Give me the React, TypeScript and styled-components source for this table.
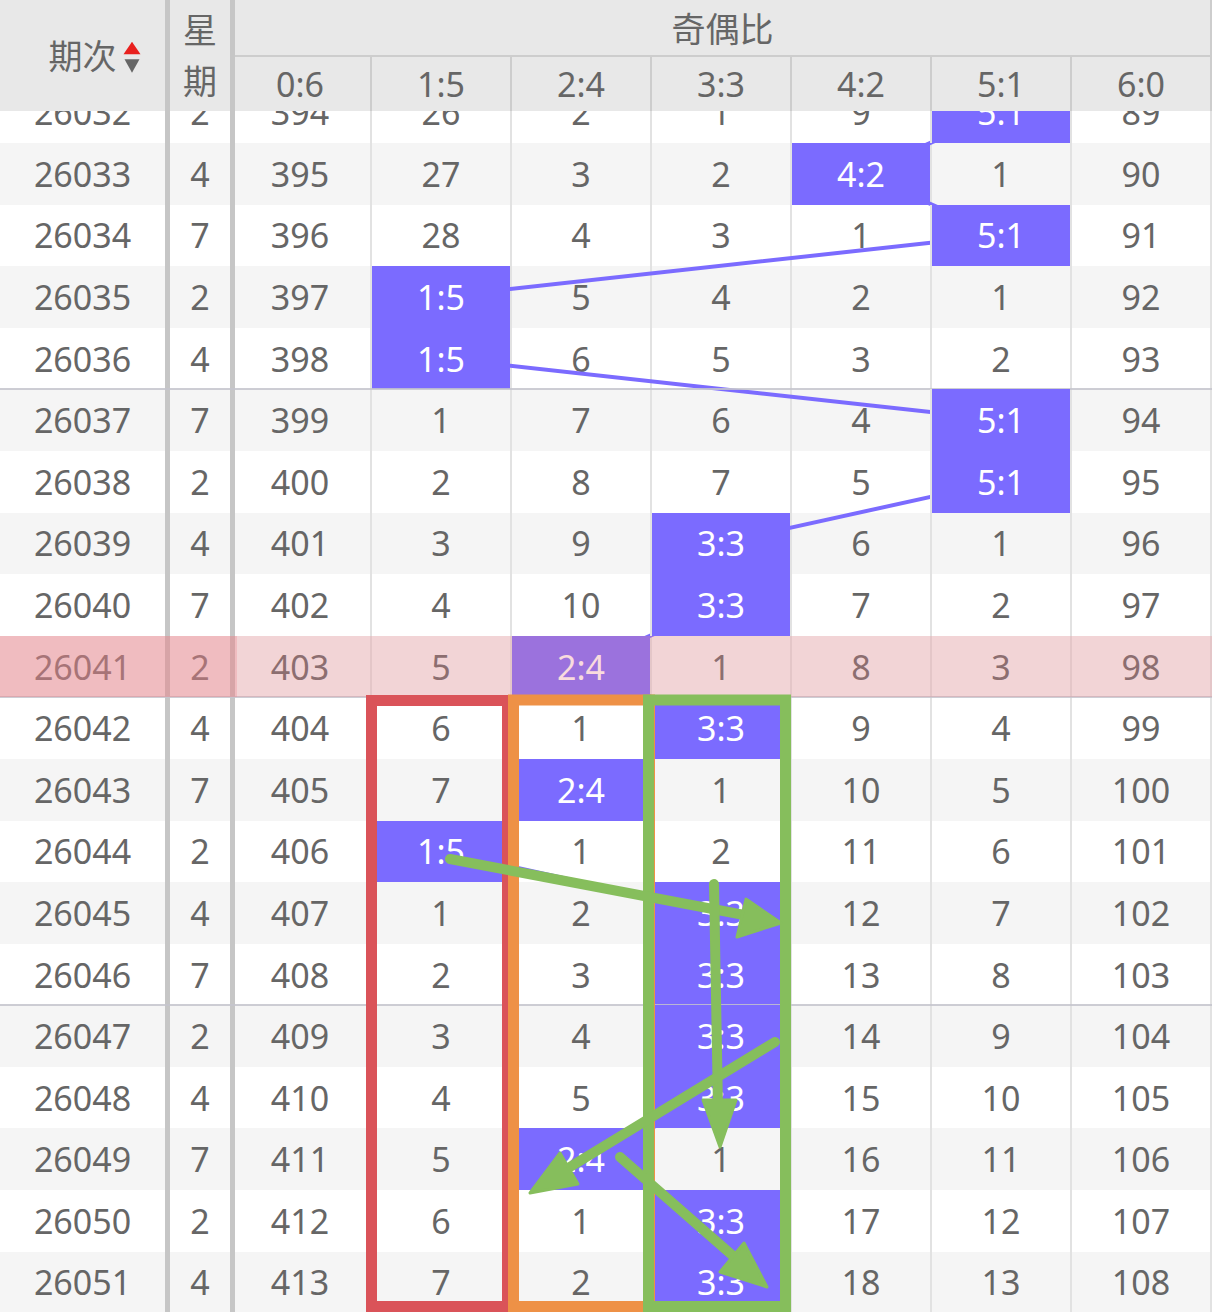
import React from "react";
import styled, { createGlobalStyle, css } from "styled-components";

const ROW_H = 61.6;
const BODY_TOP = 81.4;
const COLS = "170px 65px 135px repeat(5, 140px) 142px";
const PURPLE = "#7b6bff";
const GREEN = "#86be5c";

const LABELS = ["0:6", "1:5", "2:4", "3:3", "4:2", "5:1", "6:0"];

type RowData = { period: number; week: number; vals: (number | null)[]; hit: number };

const mk = (period: number, week: number, vals: (number | null)[]): RowData => ({
  period,
  week,
  vals,
  hit: vals.indexOf(null),
});

const ROWS: RowData[] = [
  mk(26032, 2, [394, 26, 2, 1, 9, null, 89]),
  mk(26033, 4, [395, 27, 3, 2, null, 1, 90]),
  mk(26034, 7, [396, 28, 4, 3, 1, null, 91]),
  mk(26035, 2, [397, null, 5, 4, 2, 1, 92]),
  mk(26036, 4, [398, null, 6, 5, 3, 2, 93]),
  mk(26037, 7, [399, 1, 7, 6, 4, null, 94]),
  mk(26038, 2, [400, 2, 8, 7, 5, null, 95]),
  mk(26039, 4, [401, 3, 9, null, 6, 1, 96]),
  mk(26040, 7, [402, 4, 10, null, 7, 2, 97]),
  mk(26041, 2, [403, 5, null, 1, 8, 3, 98]),
  mk(26042, 4, [404, 6, 1, null, 9, 4, 99]),
  mk(26043, 7, [405, 7, null, 1, 10, 5, 100]),
  mk(26044, 2, [406, null, 1, 2, 11, 6, 101]),
  mk(26045, 4, [407, 1, 2, null, 12, 7, 102]),
  mk(26046, 7, [408, 2, 3, null, 13, 8, 103]),
  mk(26047, 2, [409, 3, 4, null, 14, 9, 104]),
  mk(26048, 4, [410, 4, 5, null, 15, 10, 105]),
  mk(26049, 7, [411, 5, null, 1, 16, 11, 106]),
  mk(26050, 2, [412, 6, 1, null, 17, 12, 107]),
  mk(26051, 4, [413, 7, 2, null, 18, 13, 108]),
];

const HIGHLIGHT = 26041;
const DIVIDER_AFTER = new Set([26036, 26041, 26046]);

const GlobalStyle = createGlobalStyle`
  html, body { margin: 0; padding: 0; background: #fff; }
  body {
    font-family: "Noto Sans", "Noto Sans CJK SC", sans-serif;
    overflow: hidden;
  }
`;

const Viewport = styled.div`
  position: relative;
  width: 1212px;
  height: 1312px;
  overflow: hidden;
  color: #666;
  font-size: 34px;
`;

const Header = styled.div`
  position: absolute;
  top: 0;
  left: 0;
  width: 1212px;
  height: 111px;
  z-index: 5;
  display: grid;
  grid-template-columns: ${COLS};
  grid-template-rows: 57px 54px;
  background: #e8e8e8;
`;

const centered = css`
  display: flex;
  align-items: center;
  justify-content: center;
  box-sizing: border-box;
`;

const PeriodHead = styled.div`
  ${centered};
  grid-column: 1;
  grid-row: 1 / 3;
  border-right: 5px solid #c6c6c6;
`;

const SortLabel = styled.span`
  position: relative;
  line-height: 1;
`;

const SortIcon = styled.svg`
  position: absolute;
  left: calc(100% + 6px);
  top: 50%;
  transform: translateY(-46%);
`;

const WeekHead = styled.div`
  ${centered};
  grid-column: 2;
  grid-row: 1 / 3;
  border-right: 5px solid #c6c6c6;
  text-align: center;
  line-height: 51px;
`;

const GroupHead = styled.div`
  ${centered};
  grid-column: 3 / 10;
  grid-row: 1;
  border-bottom: 2px solid #cdcdcd;
  border-right: 2px solid #cdcdcd;
`;

type Variant = "first" | "data" | "last";

const ColHead = styled.div<{ $variant: Variant }>`
  ${centered};
  grid-row: 2;
  ${(p) =>
    p.$variant === "first"
      ? css`padding-right: 5px;`
      : css`border-left: 2px solid #cdcdcd;`}
  ${(p) => p.$variant === "last" && css`border-right: 2px solid #cdcdcd;`}
`;

const Body = styled.div`
  position: relative;
  margin-top: ${BODY_TOP}px;
`;

const Row = styled.div<{ $alt: boolean; $divider: boolean }>`
  position: relative;
  display: grid;
  grid-template-columns: ${COLS};
  height: ${ROW_H}px;
  background: ${(p) => (p.$alt ? "#f5f5f5" : "#ffffff")};
  ${(p) =>
    p.$divider &&
    css`
      &::after {
        content: "";
        position: absolute;
        left: 0;
        right: 0;
        bottom: -1px;
        height: 2px;
        background: rgba(196, 196, 204, 0.85);
        z-index: 2;
      }
    `}
`;

const FixedCell = styled.div`
  ${centered};
  border-right: 5px solid #c6c6c6;
`;

const DataCell = styled.div<{ $variant: Variant; $hit: boolean }>`
  ${centered};
  ${(p) =>
    p.$variant === "first"
      ? css`padding-right: 5px;`
      : css`border-left: 2px solid #e2e2e2;`}
  ${(p) => p.$variant === "last" && css`border-right: 2px solid #e2e2e2;`}
  ${(p) =>
    p.$hit &&
    css`
      position: relative;
      z-index: 2;
      background: ${PURPLE};
      color: #fff;
    `}
`;

const Tint = styled.span<{ $fixed?: boolean }>`
  position: absolute;
  top: 0;
  bottom: 0;
  left: 0;
  width: ${(p) => (p.$fixed ? "237px" : "100%")};
  background: rgba(234, 130, 137, 0.29);
  z-index: 3;
  pointer-events: none;
`;

const TrendLayer = styled.svg`
  position: absolute;
  top: 0;
  left: 0;
  z-index: 1;
  pointer-events: none;
`;

const Annotations = styled.svg`
  position: absolute;
  top: 0;
  left: 0;
  z-index: 4;
  pointer-events: none;
`;

const colCenter = (k: number) => 441 + (k - 1) * 140;

function Arrow({
  x1,
  y1,
  x2,
  y2,
  head,
}: {
  x1: number;
  y1: number;
  x2: number;
  y2: number;
  head: [number, number][];
}) {
  return (
    <g>
      <line x1={x1} y1={y1} x2={x2} y2={y2} stroke={GREEN} strokeWidth={10} strokeLinecap="round" />
      <polygon
        points={head.map((p) => p.join(",")).join(" ")}
        fill={GREEN}
        stroke={GREEN}
        strokeWidth={3}
        strokeLinejoin="round"
      />
    </g>
  );
}

export default function App() {
  const trendPts = ROWS.map((r, i) => `${colCenter(r.hit)},${i * ROW_H + ROW_H / 2}`).join(" ");

  return (
    <>
      <GlobalStyle />
      <Viewport>
        <Header>
          <PeriodHead>
            <SortLabel>
              期次
              <SortIcon width="18" height="32" viewBox="0 0 18 32">
                <polygon points="0.5,13 9,0.5 17.5,13" fill="#e8201e" />
                <polygon points="1.5,18 16.5,18 9,31.5" fill="#666" />
              </SortIcon>
            </SortLabel>
          </PeriodHead>
          <WeekHead>星期</WeekHead>
          <GroupHead>奇偶比</GroupHead>
          {LABELS.map((l, j) => (
            <ColHead key={l} $variant={j === 0 ? "first" : j === 6 ? "last" : "data"}>
              {l}
            </ColHead>
          ))}
        </Header>

        <Body>
          <TrendLayer width="1212" height={ROWS.length * ROW_H} viewBox={`0 0 1212 ${ROWS.length * ROW_H}`}>
            <polyline points={trendPts} fill="none" stroke={PURPLE} strokeWidth={4} strokeLinejoin="round" />
          </TrendLayer>
          {ROWS.map((r, i) => (
            <Row key={r.period} $alt={i % 2 === 1} $divider={DIVIDER_AFTER.has(r.period)}>
              <FixedCell>{r.period}</FixedCell>
              <FixedCell>{r.week}</FixedCell>
              {r.vals.map((v, j) => (
                <DataCell
                  key={j}
                  $variant={j === 0 ? "first" : j === 6 ? "last" : "data"}
                  $hit={v === null}
                >
                  {v === null ? LABELS[j] : v}
                </DataCell>
              ))}
              {r.period === HIGHLIGHT && (
                <>
                  <Tint />
                  <Tint $fixed />
                </>
              )}
            </Row>
          ))}
        </Body>

        <Annotations width="1212" height="1312" viewBox="0 0 1212 1312">
          <rect x={371.5} y={700.5} width={136} height={606} fill="none" stroke="#da5359" strokeWidth={11} />
          <rect x={513.5} y={700} width={136} height={606.5} fill="none" stroke="#ee9146" strokeWidth={11} />
          <rect x={648.5} y={700} width={137} height={606.5} fill="none" stroke={GREEN} strokeWidth={11} />
          <Arrow x1={450} y1={859} x2={760} y2={918} head={[[781, 923], [746, 899], [737, 937]]} />
          <Arrow x1={714} y1={884} x2={718} y2={1108} head={[[720, 1147], [703, 1100], [736, 1100]]} />
          <Arrow x1={775} y1={1042} x2={565} y2={1170} head={[[530, 1193], [560, 1153], [578, 1184]]} />
          <Arrow x1={620} y1={1157} x2={740} y2={1262} head={[[767, 1287], [744, 1243], [720, 1272]]} />
        </Annotations>
      </Viewport>
    </>
  );
}
